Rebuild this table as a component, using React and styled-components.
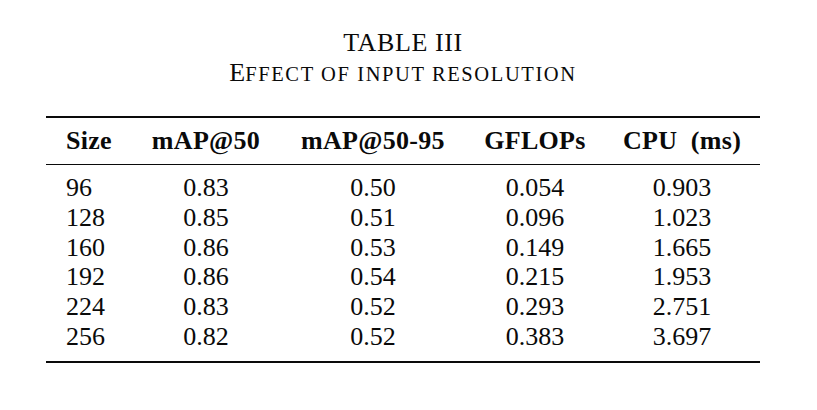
import React from "react";
import styled, { createGlobalStyle } from "styled-components";

const GlobalStyle = createGlobalStyle`
  html, body {
    margin: 0;
    padding: 0;
    background: #fff;
  }
  body {
    font-family: "Liberation Serif", "Times New Roman", serif;
    color: #0a0a0a;
  }
`;

const Page = styled.div`
  width: 817px;
  height: 410px;
  padding-top: 28px;
  box-sizing: border-box;
`;

const Caption = styled.div`
  width: 714px;
  margin-left: 46px;
  text-align: center;
  font-size: 26px;
  line-height: 30px;
`;

const CaptionTitle = styled.div`
  letter-spacing: 0.6px;
`;

// hand made small caps: the font's synthetic ones come out too small
const SmallCaps = styled.span`
  font-size: 20.5px;
  text-transform: uppercase;
  letter-spacing: 1.6px;
`;

const Table = styled.div`
  width: 714px;
  margin-left: 46px;
  margin-top: 27px;
  border-top: 2px solid #0a0a0a;
  border-bottom: 2px solid #0a0a0a;
`;

const Head = styled.div`
  border-bottom: 1.5px solid #0a0a0a;
  padding: 10px 0 10px;
`;

const Body = styled.div`
  padding: 8px 0 9px;
`;

const Row = styled.div`
  display: grid;
  grid-template-columns: 86px 148px 186px 138px 156px;
  font-size: 26px;
  line-height: ${({ $head }) => ($head ? "26px" : "29.8px")};
  font-weight: ${({ $head }) => ($head ? 700 : 400)};
  letter-spacing: ${({ $head }) => ($head ? "0.3px" : "0")};
`;

const Cell = styled.div`
  text-align: ${({ $left }) => ($left ? "left" : "center")};
  padding-left: ${({ $left }) => ($left ? "20px" : "0")};
  white-space: nowrap;
`;

const columns = ["Size", "mAP@50", "mAP@50-95", "GFLOPs", "CPU\u00a0 (ms)"];

const rows = [
  ["96", "0.83", "0.50", "0.054", "0.903"],
  ["128", "0.85", "0.51", "0.096", "1.023"],
  ["160", "0.86", "0.53", "0.149", "1.665"],
  ["192", "0.86", "0.54", "0.215", "1.953"],
  ["224", "0.83", "0.52", "0.293", "2.751"],
  ["256", "0.82", "0.52", "0.383", "3.697"],
];

const App = () => {
  return (
    <>
      <GlobalStyle />
      <Page>
        <Caption>
          <CaptionTitle>TABLE III</CaptionTitle>
          <div>
            E<SmallCaps>ffect of input resolution</SmallCaps>
          </div>
        </Caption>
        <Table>
          <Head>
            <Row $head>
              {columns.map((c, i) => (
                <Cell key={c} $left={i === 0}>
                  {c}
                </Cell>
              ))}
            </Row>
          </Head>
          <Body>
            {rows.map((r) => (
              <Row key={r[0]}>
                {r.map((v, i) => (
                  <Cell key={i} $left={i === 0}>
                    {v}
                  </Cell>
                ))}
              </Row>
            ))}
          </Body>
        </Table>
      </Page>
    </>
  );
};

export default App;
